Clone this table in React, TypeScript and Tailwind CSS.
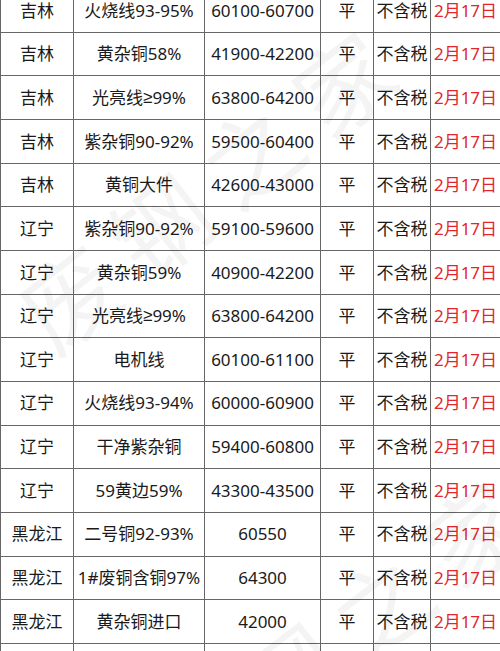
import React from 'react';

const rows: [string, string, string][] = [
  ['吉林', '火烧线93-95%', '60100-60700'],
  ['吉林', '黄杂铜58%', '41900-42200'],
  ['吉林', '光亮线≥99%', '63800-64200'],
  ['吉林', '紫杂铜90-92%', '59500-60400'],
  ['吉林', '黄铜大件', '42600-43000'],
  ['辽宁', '紫杂铜90-92%', '59100-59600'],
  ['辽宁', '黄杂铜59%', '40900-42200'],
  ['辽宁', '光亮线≥99%', '63800-64200'],
  ['辽宁', '电机线', '60100-61100'],
  ['辽宁', '火烧线93-94%', '60000-60900'],
  ['辽宁', '干净紫杂铜', '59400-60800'],
  ['辽宁', '59黄边59%', '43300-43500'],
  ['黑龙江', '二号铜92-93%', '60550'],
  ['黑龙江', '1#废铜含铜97%', '64300'],
  ['黑龙江', '黄杂铜进口', '42000'],
  ['黑龙江', '剥皮黄铜合料', '42300'],
];

const cell = 'flex items-center justify-center border-r border-b border-[#666] whitespace-nowrap overflow-hidden';

// render ≥ in a font with an upright glyph
function Item({ text }: { text: string }) {
  const parts = text.split('≥');
  if (parts.length === 1) return <>{text}</>;
  return (
    <>
      {parts[0]}
      <span className="font-['Liberation_Sans',sans-serif]">≥</span>
      {parts[1]}
    </>
  );
}

export default function App() {
  return (
    <div className="relative w-[500px] h-[651px] overflow-hidden bg-white text-[17px] text-[#1a1a1a] font-['Noto_Sans','Noto_Sans_CJK_SC',sans-serif]">
      {/* Price table */}
      <div className="-mt-[11px] border-l border-[#666]">
        {rows.map(([region, item, price], i) => (
          <div
            key={i}
            className="grid grid-cols-[73px_131px_116px_53px_57px_70px] h-[43.67px]"
          >
            <div className={cell}>{region}</div>
            <div className={cell}>
              <Item text={item} />
            </div>
            <div className={cell}>{price}</div>
            <div className={cell}>平</div>
            <div className={cell}>不含税</div>
            <div className={`${cell} text-[#e2262b]`}>2月17日</div>
          </div>
        ))}
      </div>

      {/* Watermark */}
      <div className="pointer-events-none absolute left-[-20px] top-[110px] -rotate-[38deg] whitespace-nowrap text-[96px] tracking-[20px] text-black/[0.045] font-['Noto_Sans_CJK_SC',sans-serif]">
        废钢之家
      </div>
      <div className="pointer-events-none absolute left-[110px] top-[560px] -rotate-[38deg] whitespace-nowrap text-[96px] tracking-[20px] text-black/[0.045] font-['Noto_Sans_CJK_SC',sans-serif]">
        废钢之家
      </div>
    </div>
  );
}
